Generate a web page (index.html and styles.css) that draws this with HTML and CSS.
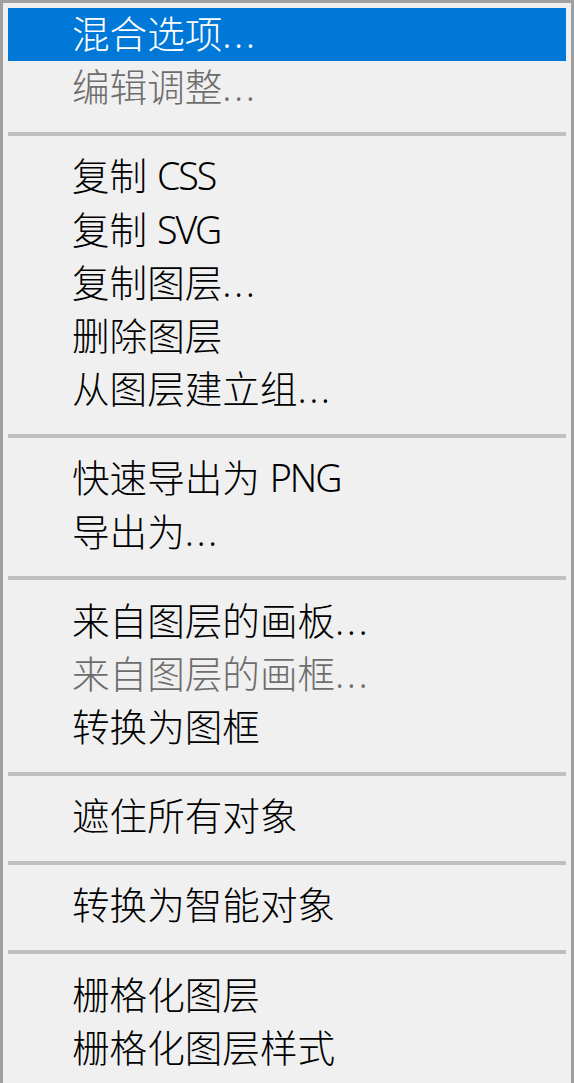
FILE: index.html
```html
<!DOCTYPE html>
<html lang="zh-CN">
<head>
<meta charset="utf-8">
<title>菜单</title>
<link rel="stylesheet" href="styles.css">
</head>
<body>
<div class="menu">
  <div class="item active">混合选项<span class="dots">...</span></div>
  <div class="item disabled">编辑调整<span class="dots">...</span></div>
  <div class="sep"></div>
  <div class="item">复制 <span class="latin">CSS</span></div>
  <div class="item">复制 <span class="latin">SVG</span></div>
  <div class="item">复制图层<span class="dots">...</span></div>
  <div class="item">删除图层</div>
  <div class="item">从图层建立组<span class="dots">...</span></div>
  <div class="sep"></div>
  <div class="item">快速导出为 <span class="latin">PNG</span></div>
  <div class="item">导出为<span class="dots">...</span></div>
  <div class="sep"></div>
  <div class="item">来自图层的画板<span class="dots">...</span></div>
  <div class="item disabled">来自图层的画框<span class="dots">...</span></div>
  <div class="item">转换为图框</div>
  <div class="sep"></div>
  <div class="item">遮住所有对象</div>
  <div class="sep"></div>
  <div class="item">转换为智能对象</div>
  <div class="sep"></div>
  <div class="item">栅格化图层</div>
  <div class="item">栅格化图层样式</div>
</div>
</body>
</html>
```
FILE: styles.css
```css
html, body {
  margin: 0;
  padding: 0;
  background: #f0f0f0;
  overflow: hidden;
}

.menu {
  box-sizing: border-box;
  width: 574px;
  height: 1083px;
  border: 3px solid #a0a0a0;
  border-bottom: none;
  padding: 5px 5px 0;
  background: #f0f0f0;
  font-family: "Noto Sans", "Noto Sans CJK SC", sans-serif;
  font-size: 37.6px;
  font-weight: 300;
}

.item {
  height: 53.2px;
  line-height: 51px;
  padding-left: 64px;
  color: #000;
  white-space: nowrap;
}

.item.active {
  background: #0078d7;
  color: #fff;
}

.item.disabled {
  color: #6d6d6d;
}

.latin {
  letter-spacing: -2px;
}

.dots {
  letter-spacing: 2.5px;
}

.sep {
  height: 4px;
  margin: 17.5px 0 14.5px;
  background: #bfbfbf;
}
```
